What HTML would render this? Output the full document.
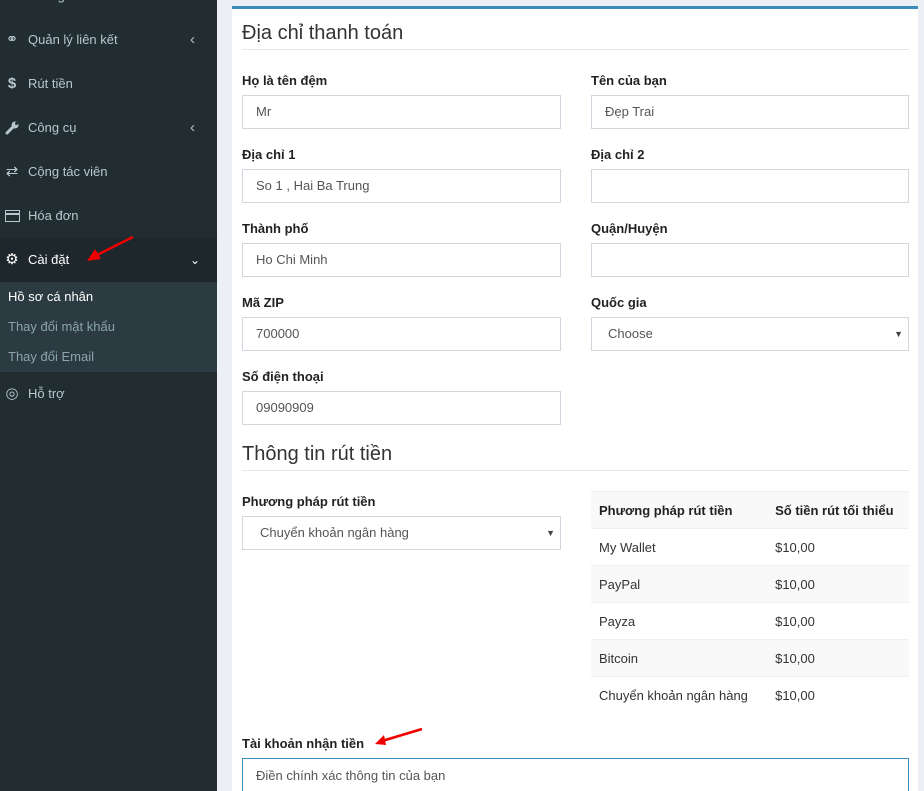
<!DOCTYPE html>
<html><head><meta charset="utf-8"><style>
*{box-sizing:border-box;margin:0;padding:0}
html,body{width:924px;height:791px;overflow:hidden}
body{background:#ecf0f5;font-family:"Liberation Sans",sans-serif;font-size:13px;color:#333;position:relative}
.sb{position:absolute;left:0;top:0;width:217px;height:791px;background:#222d32}
.it{position:absolute;left:0;width:217px;height:44px;color:#b8c7ce;font-size:13px;line-height:44px;padding-left:28px}
.it .ic{position:absolute;left:3px;top:0;width:18px;text-align:center;color:#b8c7ce;font-size:15px}
.it .ar{position:absolute;left:190px;top:0;font-size:15px}
.sub{position:absolute;left:0;top:282px;width:217px;height:90px;background:#2c3b41}
.sub div{height:30px;line-height:30px;padding-left:8px;color:#8aa4af;font-size:13px}
.box{position:absolute;left:232px;top:6px;width:686px;height:785px;background:#fff;border-top:3px solid #3c8dbc}
.h{position:absolute;font-size:20px;color:#333;font-weight:normal}
.hl{position:absolute;left:242px;width:667px;height:1px;background:#e5e5e5}
.lb{position:absolute;font-weight:bold;font-size:13px;color:#222}
.in{position:absolute;width:319px;height:34px;border:1px solid #d2d6de;padding-left:13px;line-height:32px;font-size:13px;color:#555}
.in.r{width:318px}
.caret{position:absolute;right:5px;top:0;font-size:9px;color:#444}
table{position:absolute;left:591px;top:491px;width:318px;border-collapse:collapse;font-size:13px}
td,th{height:37px;padding-left:8px;text-align:left;border-top:1px solid #f0f0f0}
tr:nth-child(odd){background:#f9f9f9}
th{font-weight:bold;color:#222}
</style></head><body>
<div class="sb">
<div class="it" style="top:-26px"><span class="ic">▬</span>Thống kê</div>
<div class="it" style="top:18px"><span class="ic">⚭</span>Quản lý liên kết<span class="ar">‹</span></div>
<div class="it" style="top:62px"><span class="ic" style="font-weight:bold">$</span>Rút tiền</div>
<div class="it" style="top:106px"><span class="ic"><svg width="14" height="14" style="vertical-align:middle"><path d="M2 12 L8 6" stroke="#b8c7ce" stroke-width="3" stroke-linecap="round"/><circle cx="10" cy="4" r="3.5" fill="#b8c7ce"/><circle cx="11.5" cy="2.5" r="1.5" fill="#222d32"/></svg></span>Công cụ<span class="ar">‹</span></div>
<div class="it" style="top:150px"><span class="ic">⇄</span>Cộng tác viên</div>
<div class="it" style="top:194px"><span class="ic"><svg width="15" height="12" style="vertical-align:middle"><rect x="0.5" y="0.5" width="14" height="11" fill="none" stroke="#b8c7ce"/><rect x="0" y="3" width="15" height="2" fill="#b8c7ce"/></svg></span>Hóa đơn</div>
<div class="it" style="top:238px;background:#1e282c;color:#fff"><span class="ic" style="color:#fff">⚙</span>Cài đặt<span class="ar" style="font-size:12px">⌄</span></div>
<svg style="position:absolute;left:85px;top:235px" width="50" height="28"><line x1="48" y1="2" x2="8" y2="22" stroke="#e00" stroke-width="2.5"/><polygon points="2,26 10,14 16,24" fill="#e00"/></svg>
<div class="sub"><div style="color:#fff">Hồ sơ cá nhân</div><div>Thay đổi mật khẩu</div><div>Thay đổi Email</div></div>
<div class="it" style="top:372px"><span class="ic">◎</span>Hỗ trợ</div>
</div>
<div class="box"></div>
<div class="h" style="left:242px;top:22px">Địa chỉ thanh toán</div><div class="hl" style="top:49px"></div>
<div class="lb" style="left:242px;top:73px">Họ là tên đệm</div><div class="in" style="left:242px;top:95px">Mr</div>
<div class="lb" style="left:591px;top:73px">Tên của bạn</div><div class="in r" style="left:591px;top:95px">Đẹp Trai</div>
<div class="lb" style="left:242px;top:147px">Địa chỉ 1</div><div class="in" style="left:242px;top:169px">So 1 , Hai Ba Trung</div>
<div class="lb" style="left:591px;top:147px">Địa chỉ 2</div><div class="in r" style="left:591px;top:169px"></div>
<div class="lb" style="left:242px;top:221px">Thành phố</div><div class="in" style="left:242px;top:243px">Ho Chi Minh</div>
<div class="lb" style="left:591px;top:221px">Quận/Huyện</div><div class="in r" style="left:591px;top:243px"></div>
<div class="lb" style="left:242px;top:295px">Mã ZIP</div><div class="in" style="left:242px;top:317px">700000</div>
<div class="lb" style="left:591px;top:295px">Quốc gia</div><div class="in r" style="left:591px;top:317px;padding-left:16px">Choose<span class="caret">▼</span></div>
<div class="lb" style="left:242px;top:369px">Số điện thoại</div><div class="in" style="left:242px;top:391px">09090909</div>
<div class="h" style="left:242px;top:443px">Thông tin rút tiền</div><div class="hl" style="top:470px"></div>
<div class="lb" style="left:242px;top:494px">Phương pháp rút tiền</div><div class="in" style="left:242px;top:516px;padding-left:17px">Chuyển khoản ngân hàng<span class="caret">▼</span></div>
<table>
<tr><th>Phương pháp rút tiền</th><th>Số tiền rút tối thiểu</th></tr>
<tr><td>My Wallet</td><td>$10,00</td></tr>
<tr><td>PayPal</td><td>$10,00</td></tr>
<tr><td>Payza</td><td>$10,00</td></tr>
<tr><td>Bitcoin</td><td>$10,00</td></tr>
<tr style="background:#fff"><td>Chuyển khoản ngân hàng</td><td>$10,00</td></tr>
</table>
<div class="lb" style="left:242px;top:736px">Tài khoản nhận tiền</div>
<svg style="position:absolute;left:372px;top:727px" width="52" height="20"><line x1="50" y1="2" x2="10" y2="14" stroke="#e00" stroke-width="2.5"/><polygon points="3,17 12,8 14,18" fill="#e00"/></svg>
<div class="in" style="left:242px;top:758px;width:667px;height:40px;border-color:#3c8dbc;line-height:34px">Điền chính xác thông tin của bạn</div>
</body></html>
